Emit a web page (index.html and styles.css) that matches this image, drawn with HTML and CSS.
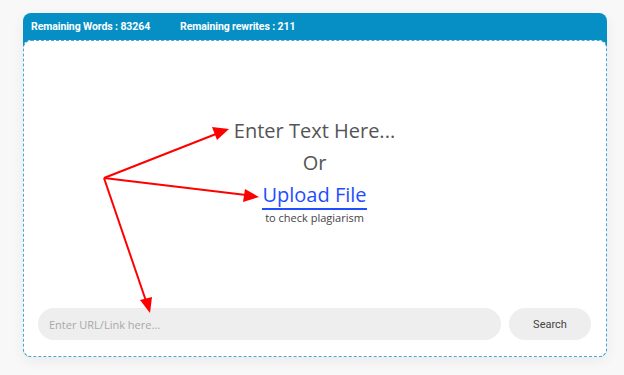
FILE: index.html
```html
<!DOCTYPE html>
<html lang="en">
<head>
  <meta charset="UTF-8" />
  <meta name="viewport" content="width=device-width, initial-scale=1.0"/>
  <title>Plagiarism Checker</title>
  <link rel="stylesheet" href="styles.css">
</head>
<body>

  <div class="page">
    <div class="checker">
      <div class="stats">
        <span>Remaining Words : 83264</span>
        <span>Remaining rewrites : 211</span>
      </div>

      <div class="panel">
        <div class="prompt">
          <div class="prompt-main">Enter Text Here...</div>
          <div class="prompt-or">Or</div>
          <a class="upload" href="#">Upload File</a>
          <div class="prompt-sub">to check plagiarism</div>
        </div>

        <div class="url-row">
          <input type="text" class="url-input" placeholder="Enter URL/Link here..." />
          <button class="search-btn">Search</button>
        </div>
      </div>
    </div>

    <!-- annotation arrows drawn over the screenshot -->
    <svg class="arrows" width="624" height="375" viewBox="0 0 624 375">
      <g stroke="#f00" stroke-width="2" fill="none">
        <line x1="104" y1="178" x2="216" y2="134" />
        <line x1="104" y1="178" x2="246" y2="195" />
        <line x1="104" y1="178" x2="146" y2="301" />
      </g>
      <g fill="#f00">
        <polygon points="229,129 212,127 217,140" />
        <polygon points="259,197 245,189 243,202" />
        <polygon points="150,313 140,300 152,297" />
      </g>
    </svg>
  </div>

</body>
</html>
```

FILE: styles.css
```css
body {
  margin: 0;
  padding: 0;
  background: #f8f8f8;
  font-family: "Open Sans", Roboto, Arial, sans-serif;
}

.page {
  position: relative;
  width: 624px;
  height: 375px;
  padding-top: 13px;
  box-sizing: border-box;
}

.checker {
  width: 584px;
  margin-left: 23px;
  background-color: #058fc5;
  border-radius: 8px;
  box-shadow: 0 4px 14px rgba(0,0,0,0.06);
}

.stats {
  display: flex;
  gap: 30px;
  height: 27px;
  align-items: center;
  padding-left: 8px;
  color: white;
  font-family: Roboto, Arial, sans-serif;
  font-size: 10.5px;
  font-weight: bold;
  letter-spacing: -0.1px;
}

.panel {
  height: 317px;
  box-sizing: border-box;
  background-color: white;
  border: 1px dashed #4aa8d6;
  border-radius: 8px;
  display: flex;
  flex-direction: column;
  justify-content: space-between;
  padding: 0 15px 16px 14px;
}

.prompt {
  display: flex;
  flex-direction: column;
  align-items: center;
  margin-top: 76px;
  color: #555;
}

.prompt-main {
  font-size: 20px;
  line-height: 28px;
}

.prompt-or {
  font-size: 20px;
  line-height: 28px;
  margin-top: 4px;
}

.upload {
  font-size: 20px;
  line-height: 26px;
  margin-top: 5px;
  color: #1f4dff;
  text-decoration: none;
  border-bottom: 2px solid #1f4dff;
}

.prompt-sub {
  font-size: 11px;
  line-height: 14px;
  margin-top: 1px;
  color: #444;
}

.url-row {
  display: flex;
  gap: 8px;
}

.url-input {
  flex: 1;
  height: 32px;
  border: none;
  border-radius: 16px;
  background-color: #eeeeee;
  padding: 0 11px;
  font-family: "Open Sans", Arial, sans-serif;
  font-size: 11px;
  outline: none;
}

.url-input::placeholder {
  color: #a8a8a8;
}

.search-btn {
  width: 82px;
  height: 32px;
  border: none;
  border-radius: 16px;
  background-color: #eeeeee;
  color: #444;
  font-family: Roboto, Arial, sans-serif;
  font-size: 11px;
  cursor: pointer;
}

.arrows {
  position: absolute;
  top: 0;
  left: 0;
  pointer-events: none;
}
```
